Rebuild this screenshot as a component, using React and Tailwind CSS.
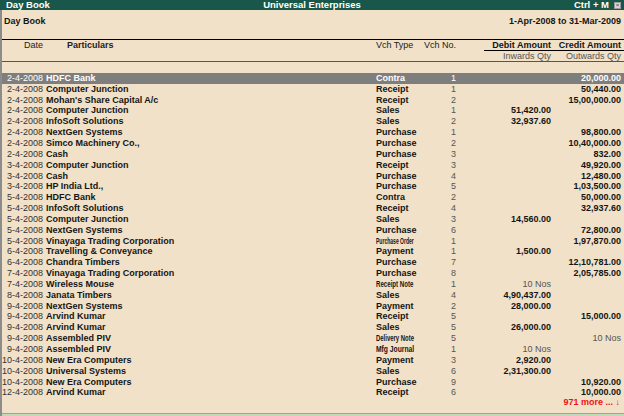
import React from 'react';

const rows = [
  { date: '2-4-2008', name: 'HDFC Bank', type: 'Contra', no: '1', cr: '20,000.00' },
  { date: '2-4-2008', name: 'Computer Junction', type: 'Receipt', no: '1', cr: '50,440.00' },
  { date: '2-4-2008', name: "Mohan's Share Capital A/c", type: 'Receipt', no: '2', cr: '15,00,000.00' },
  { date: '2-4-2008', name: 'Computer Junction', type: 'Sales', no: '1', dr: '51,420.00' },
  { date: '2-4-2008', name: 'InfoSoft Solutions', type: 'Sales', no: '2', dr: '32,937.60' },
  { date: '2-4-2008', name: 'NextGen Systems', type: 'Purchase', no: '1', cr: '98,800.00' },
  { date: '2-4-2008', name: 'Simco Machinery Co.,', type: 'Purchase', no: '2', cr: '10,40,000.00' },
  { date: '2-4-2008', name: 'Cash', type: 'Purchase', no: '3', cr: '832.00' },
  { date: '3-4-2008', name: 'Computer Junction', type: 'Receipt', no: '3', cr: '49,920.00' },
  { date: '3-4-2008', name: 'Cash', type: 'Purchase', no: '4', cr: '12,480.00' },
  { date: '3-4-2008', name: 'HP India Ltd.,', type: 'Purchase', no: '5', cr: '1,03,500.00' },
  { date: '5-4-2008', name: 'HDFC Bank', type: 'Contra', no: '2', cr: '50,000.00' },
  { date: '5-4-2008', name: 'InfoSoft Solutions', type: 'Receipt', no: '4', cr: '32,937.60' },
  { date: '5-4-2008', name: 'Computer Junction', type: 'Sales', no: '3', dr: '14,560.00' },
  { date: '5-4-2008', name: 'NextGen Systems', type: 'Purchase', no: '6', cr: '72,800.00' },
  { date: '5-4-2008', name: 'Vinayaga Trading Corporation', type: 'Purchase Order', no: '1', cr: '1,97,870.00' },
  { date: '6-4-2008', name: 'Travelling & Conveyance', type: 'Payment', no: '1', dr: '1,500.00' },
  { date: '6-4-2008', name: 'Chandra Timbers', type: 'Purchase', no: '7', cr: '12,10,781.00' },
  { date: '7-4-2008', name: 'Vinayaga Trading Corporation', type: 'Purchase', no: '8', cr: '2,05,785.00' },
  { date: '7-4-2008', name: 'Wireless Mouse', type: 'Receipt Note', no: '1', dr: '10 Nos', qty: true },
  { date: '8-4-2008', name: 'Janata Timbers', type: 'Sales', no: '4', dr: '4,90,437.00' },
  { date: '9-4-2008', name: 'NextGen Systems', type: 'Payment', no: '2', dr: '28,000.00' },
  { date: '9-4-2008', name: 'Arvind Kumar', type: 'Receipt', no: '5', cr: '15,000.00' },
  { date: '9-4-2008', name: 'Arvind Kumar', type: 'Sales', no: '5', dr: '26,000.00' },
  { date: '9-4-2008', name: 'Assembled PIV', type: 'Delivery Note', no: '5', cr: '10 Nos', qty: true },
  { date: '9-4-2008', name: 'Assembled PIV', type: 'Mfg Journal', no: '1', dr: '10 Nos', qty: true },
  { date: '10-4-2008', name: 'New Era Computers', type: 'Payment', no: '3', dr: '2,920.00' },
  { date: '10-4-2008', name: 'Universal Systems', type: 'Sales', no: '6', dr: '2,31,300.00' },
  { date: '10-4-2008', name: 'New Era Computers', type: 'Purchase', no: '9', cr: '10,920.00' },
  { date: '12-4-2008', name: 'Arvind Kumar', type: 'Receipt', no: '6', cr: '10,000.00' },
];

// long voucher type names are squeezed into the column like Tally does
const squeeze = {
  'Purchase Order': 'scale-x-[0.56]',
  'Receipt Note': 'scale-x-[0.68]',
  'Delivery Note': 'scale-x-[0.66]',
  'Mfg Journal': 'scale-x-[0.75]',
};

function Row({ r, sel }) {
  const amt = r.qty
    ? sel ? 'font-normal' : 'font-normal text-[#555]'
    : 'font-bold';
  return (
    <div className={`flex h-[10.85px] shrink-0 items-center leading-none whitespace-nowrap ${sel ? 'bg-[#7e7e7e] text-white' : 'text-[#151515]'}`}>
      <div className={`w-[41px] shrink-0 text-right ${sel ? '' : 'text-[#333]'}`}>{r.date}</div>
      <div className="w-[333px] shrink-0 pl-[3px] font-bold">{r.name}</div>
      <div className="w-[48px] shrink-0 font-bold">
        <span className={`inline-block origin-left ${squeeze[r.type] || ''}`}>{r.type}</span>
      </div>
      <div className={`w-[32px] shrink-0 text-right ${sel ? '' : 'text-[#555]'}`}>{r.no}</div>
      <div className={`w-[95px] shrink-0 text-right ${amt}`}>{r.dr}</div>
      <div className={`w-[70px] shrink-0 text-right ${amt}`}>{r.cr}</div>
    </div>
  );
}

export default function App() {
  return (
    <div className="w-[624px] h-[416px] overflow-hidden flex flex-col bg-[#f0e1c8] font-['Liberation_Sans',Arial,sans-serif] text-[9px] select-none">
      <div className="h-[10px] shrink-0 bg-[#18574a] text-white text-[9.5px] font-bold leading-none grid grid-cols-[1fr_auto_1fr] items-center">
        <span className="pl-[6px]">Day Book</span>
        <span>Universal Enterprises</span>
        <span className="flex items-center justify-end gap-[5px] pr-[3px]">
          Ctrl + M
          <span className="w-[7px] h-[7px] bg-[#d8d8d8] border border-[#9a9a9a] flex items-center justify-center text-[6px] text-[#666] leading-none">×</span>
        </span>
      </div>

      <div className="flex-1 flex flex-col border-l-2 border-[#8c8c8c] min-h-0">
        <div className="h-[30px] shrink-0 border-b border-black flex justify-between pt-[6px] pr-[3px] pl-[2px] font-bold text-[#151515] leading-none">
          <div className="h-[11px] flex items-center">Day Book</div>
          <div className="h-[11px] flex items-center">1-Apr-2008 to 31-Mar-2009</div>
        </div>

        <div className="h-[11px] shrink-0 flex items-end leading-none text-[#222]">
          <div className="w-[41px] h-[11px] flex items-center justify-end shrink-0">Date</div>
          <div className="w-[333px] h-[11px] flex items-center shrink-0 pl-[24px] font-bold">Particulars</div>
          <div className="w-[48px] h-[11px] flex items-center shrink-0">Vch Type</div>
          <div className="w-[32px] h-[11px] flex items-center shrink-0">Vch No.</div>
          <div className="w-[28px] shrink-0" />
          <div className="flex-1 h-[11px] flex items-center border-b border-black font-bold text-[#151515]">
            <div className="w-[67px] text-right">Debit Amount</div>
            <div className="w-[70px] text-right">Credit Amount</div>
          </div>
        </div>
        <div className="h-[11px] shrink-0 flex items-center justify-end leading-none text-[#555] border-b border-[#555]">
          <div className="w-[67px] text-right">Inwards Qty</div>
          <div className="w-[70px] text-right pr-0">Outwards Qty</div>
          <div className="w-[3px]" />
        </div>

        <div className="h-[11px] shrink-0" />

        {rows.map((r, i) => (
          <Row key={i} r={r} sel={i === 0} />
        ))}

        <div className="h-[9px] shrink-0 flex items-center justify-end pr-[4px] leading-none font-bold text-[#ee1111]">
          971 more ... ↓
        </div>
        <div className="flex-1" />
        <div className="h-[3px] shrink-0 bg-[#c2d8b8] border-t border-[#8fae8a]" />
      </div>
    </div>
  );
}
